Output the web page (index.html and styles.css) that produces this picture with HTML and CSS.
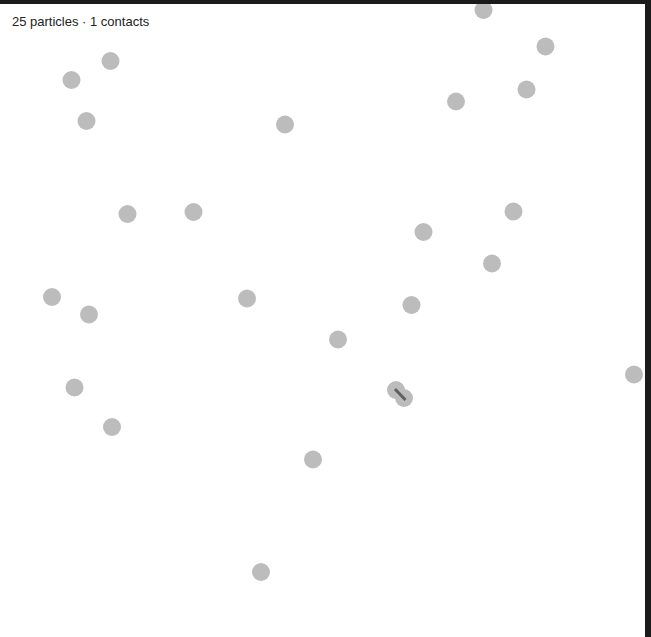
FILE: index.html
```html
<!DOCTYPE html>
<html>
<head>
<meta charset="utf-8">
<link rel="stylesheet" href="styles.css">
</head>
<body>
<div class="stage">
  <div class="hud">25 particles · 1 contacts</div>
  <svg class="world" width="645" height="633" viewBox="0 4 645 633">
    <g class="p">
      <circle cx="483.5" cy="10" r="9"/>
      <circle cx="545.5" cy="46.5" r="9"/>
      <circle cx="110.5" cy="61" r="9"/>
      <circle cx="71.5" cy="80" r="9"/>
      <circle cx="526.5" cy="89.5" r="9"/>
      <circle cx="456" cy="101.5" r="9"/>
      <circle cx="86.5" cy="121" r="9"/>
      <circle cx="285" cy="124.5" r="9"/>
      <circle cx="127.5" cy="214" r="9"/>
      <circle cx="193.5" cy="212" r="9"/>
      <circle cx="513.5" cy="211.5" r="9"/>
      <circle cx="423.5" cy="232" r="9"/>
      <circle cx="492" cy="263.5" r="9"/>
      <circle cx="52" cy="297" r="9"/>
      <circle cx="247" cy="298.5" r="9"/>
      <circle cx="89" cy="314.5" r="9"/>
      <circle cx="411.5" cy="305" r="9"/>
      <circle cx="338" cy="339.5" r="9"/>
      <circle cx="634" cy="374.5" r="9"/>
      <circle cx="74.5" cy="387.5" r="9"/>
      <circle cx="396" cy="390" r="9"/>
      <circle cx="404" cy="398" r="9"/>
      <circle cx="112" cy="427" r="9"/>
      <circle cx="313" cy="459.5" r="9"/>
      <circle cx="261" cy="572" r="9"/>
    </g>
    <line class="contact" x1="395" y1="389" x2="405.5" y2="400"/>
  </svg>
</div>
</body>
</html>
```
FILE: styles.css
```css
html, body {
  margin: 0;
  padding: 0;
  background: #1b1b1b;
  overflow: hidden;
}
.stage {
  position: relative;
  margin-top: 4px;
  width: 645px;
  height: 633px;
  background: #ffffff;
  overflow: hidden;
}
.world {
  position: absolute;
  left: 0;
  top: 0;
  display: block;
}
.p circle {
  fill: #bcbcbc;
}
.contact {
  stroke: #505050;
  stroke-opacity: 0.85;
  stroke-width: 3;
  stroke-linecap: butt;
}
.hud {
  position: absolute;
  left: 12px;
  top: 10px;
  z-index: 1;
  font-family: "Liberation Sans", Arial, sans-serif;
  font-size: 13px;
  line-height: 16px;
  color: #222222;
}
```
